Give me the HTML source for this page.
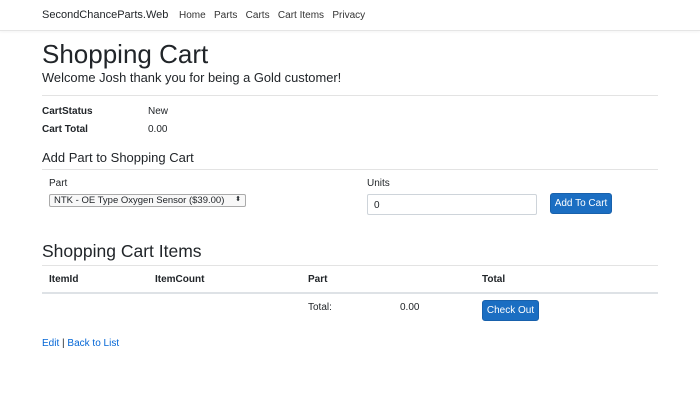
<!DOCTYPE html><html><head><style>
body{margin:0;width:700px;height:403px;background:#fff;font-family:"Liberation Sans",sans-serif;color:#212529;position:relative;overflow:hidden}
.a{position:absolute;white-space:nowrap;line-height:1}
.hr{position:absolute;left:42px;width:616px;height:1px;background:#e3e3e3}
.b{font-weight:bold;font-size:10px}
.btn{position:absolute;background:#1b6ec2;border:1px solid #1861ac;border-radius:3px;color:#fff;font-size:10px;display:flex;align-items:center;justify-content:center;box-sizing:border-box}
</style></head><body>
<div style="position:absolute;left:0;top:0;width:700px;height:30px;border-bottom:1px solid #e5e5e5;box-shadow:0 1px 3px rgba(0,0,0,.05)"></div>
<div class="a" style="left:42px;top:10px;font-size:11px">SecondChanceParts.Web</div>
<div class="a" style="left:179px;top:11px;font-size:10px;color:#333">Home&nbsp;&nbsp;&nbsp;Parts&nbsp;&nbsp;&nbsp;Carts&nbsp;&nbsp;&nbsp;Cart Items&nbsp;&nbsp;&nbsp;Privacy</div>
<div class="a" style="left:42px;top:41px;font-size:26px">Shopping Cart</div>
<div class="a" style="left:42px;top:72px;font-size:12.9px">Welcome Josh thank you for being a Gold customer!</div>
<div class="hr" style="top:95px"></div>
<div class="a b" style="left:42px;top:107px">CartStatus</div>
<div class="a" style="left:148px;top:107px;font-size:10px">New</div>
<div class="a b" style="left:42px;top:125px">Cart Total</div>
<div class="a" style="left:148px;top:125px;font-size:10px">0.00</div>
<div class="a" style="left:42px;top:151px;font-size:13px">Add Part to Shopping Cart</div>
<div class="hr" style="top:169px"></div>
<div class="a" style="left:49px;top:179px;font-size:10px">Part</div>
<div class="a" style="left:49px;top:194px;width:197px;height:13px;border:1px solid #aaa;border-radius:2px;box-sizing:border-box;font-size:9.5px;padding:1px 0 0 4px;background:#f8f8f8">NTK - OE Type Oxygen Sensor ($39.00)<span style="position:absolute;right:4px;top:1px;font-size:7px">&#x2B0D;</span></div>
<div class="a" style="left:367px;top:179px;font-size:10px">Units</div>
<div class="a" style="left:367px;top:194px;width:170px;height:21px;border:1px solid #ced4da;border-radius:2px;box-sizing:border-box;font-size:10px;padding:6px 0 0 6px">0</div>
<div class="btn" style="left:550px;top:193px;width:62px;height:21px">Add To Cart</div>
<div class="a" style="left:42px;top:243px;font-size:17.5px">Shopping Cart Items</div>
<div class="hr" style="top:265px"></div>
<div class="a b" style="left:49px;top:275px">ItemId</div>
<div class="a b" style="left:155px;top:275px">ItemCount</div>
<div class="a b" style="left:308px;top:275px">Part</div>
<div class="a b" style="left:482px;top:275px">Total</div>
<div class="hr" style="top:292px;height:2px;background:#dee2e6"></div>
<div class="a" style="left:308px;top:303px;font-size:10px">Total:</div>
<div class="a" style="left:400px;top:303px;font-size:10px">0.00</div>
<div class="btn" style="left:482px;top:300px;width:57px;height:21px">Check Out</div>
<div class="a" style="left:42px;top:339px;font-size:10px;color:#0366d6">Edit <span style="color:#212529">|</span> Back to List</div>
</body></html>
